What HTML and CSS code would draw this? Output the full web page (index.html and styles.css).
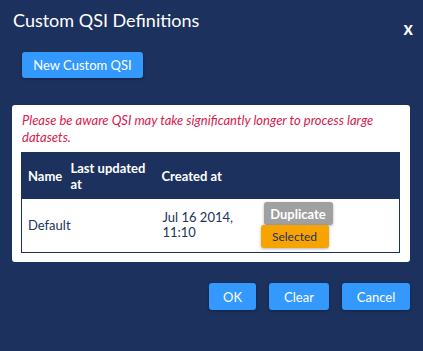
FILE: index.html
```html
<!DOCTYPE html>
<html>
<head>
<meta charset="utf-8">
<link rel="stylesheet" href="styles.css">
</head>
<body>
<div class="dialog">
  <div class="head">
    <div class="title">Custom QSI Definitions</div>
    <div class="close">x</div>
  </div>
  <div class="new-row"><button class="btn btn-blue new-btn">New Custom QSI</button></div>
  <div class="panel">
    <p class="warn">Please be aware QSI may take significantly longer to process large datasets.</p>
    <table class="grid">
      <thead>
        <tr><th class="c1">Name</th><th class="c2">Last updated at</th><th class="c3">Created at</th><th class="c4"></th></tr>
      </thead>
      <tbody>
        <tr>
          <td class="c1">Default</td>
          <td class="c2"></td>
          <td class="c3">Jul 16 2014, 11:10</td>
          <td class="c4">
            <div class="actions">
              <button class="btn btn-gray dup">Duplicate</button>
              <button class="btn btn-orange sel">Selected</button>
            </div>
          </td>
        </tr>
      </tbody>
    </table>
  </div>
  <div class="footer">
    <button class="btn btn-blue ok">OK</button>
    <button class="btn btn-blue clear">Clear</button>
    <button class="btn btn-blue cancel">Cancel</button>
  </div>
</div>
</body>
</html>
```
FILE: styles.css
```css
html, body {
  margin: 0;
  padding: 0;
  background: #1c315d;
  font-family: Lato, "Open Sans", sans-serif;
  color: #fff;
}
.dialog {
  width: 423px;
  height: 351px;
  box-sizing: border-box;
  padding: 0 13px 0 12px;
}
.head {
  display: flex;
  justify-content: space-between;
  align-items: flex-start;
  padding-top: 9px;
}
.title {
  font-size: 18px;
  line-height: 22px;
  padding-left: 1px;
}
.close {
  font-size: 18px;
  font-weight: bold;
  line-height: 20px;
  margin-top: 9px;
  margin-right: -3px;
}
.new-row {
  display: flex;
  padding: 14px 0 0 10px;
}
.btn {
  border: none;
  border-radius: 3px;
  font-family: Lato, "Open Sans", sans-serif;
  font-size: 13px;
  color: #fff;
  padding: 0;
  box-shadow: 0 1px 3px rgba(0,0,0,0.3);
}
.btn-blue { background: #3399ff; }
.new-btn { width: 121px; height: 26px; }
.panel {
  margin-top: 27px;
  background: #fff;
  border-radius: 3px;
  padding: 7px 10px 10px 9px;
  height: 157px;
  box-sizing: border-box;
}
.warn {
  margin: 0;
  color: #d6204e;
  font-style: italic;
  font-size: 13px;
  line-height: 17px;
  padding-left: 1px;
}
.grid {
  margin-top: 6px;
  width: 379px;
  table-layout: fixed;
  border-collapse: collapse;
  font-size: 13px;
  border: 1px solid #1c315d;
}
.grid th {
  background: #1c315d;
  color: #fff;
  text-align: left;
  font-weight: bold;
  font-size: 13px;
  line-height: 16px;
  height: 46px;
  padding: 0 4px 0 6px;
  box-sizing: border-box;
  vertical-align: middle;
}
.grid td {
  color: #1c315d;
  height: 53px;
  padding: 0 4px 0 6px;
  vertical-align: middle;
  line-height: 15px;
}
.c1 { width: 45px; }
.c2 { width: 91px; }
.c3 { width: 99px; }
.grid th.c2, .grid td.c2 { padding-left: 4px; }
.grid th.c3 { padding-left: 4px; }
.grid td.c3 { padding-left: 5px; }
.actions {
  display: flex;
  flex-direction: column;
  align-items: flex-start;
}
.btn-gray {
  background: #a0a0a0;
  width: 69px;
  height: 23px;
  margin-left: 1px;
  font-weight: bold;
}
.btn-orange {
  background: #f7a400;
  color: #1c315d;
  width: 68px;
  height: 23px;
  margin-left: -2px;
  font-size: 12px;
}
.footer {
  display: flex;
  justify-content: flex-end;
  gap: 13px;
  margin-top: 21px;
}
.footer .btn { height: 27px; }
.ok { width: 47px; }
.clear { width: 60px; }
.cancel { width: 68px; }
```
